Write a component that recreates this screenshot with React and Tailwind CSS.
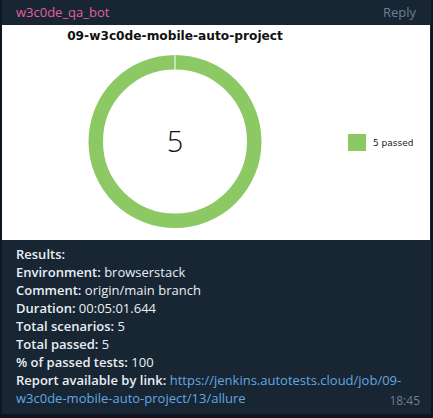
import React from "react";

const rows = [
  { label: "Environment:", value: "browserstack" },
  { label: "Comment:", value: "origin/main branch" },
  { label: "Duration:", value: "00:05:01.644" },
  { label: "Total scenarios:", value: "5" },
  { label: "Total passed:", value: "5" },
  { label: "% of passed tests:", value: "100" },
];

const Chart = () => (
  <svg width="428" height="215" viewBox="0 0 428 215" className="block">
    <rect width="428" height="215" fill="#ffffff" />
    <text
      x="173"
      y="15"
      textAnchor="middle"
      fontFamily="DejaVu Sans, sans-serif"
      fontWeight="bold"
      fontSize="12.2"
      fill="#111"
    >
      09-w3c0de-mobile-auto-project
    </text>
    <circle cx="173" cy="116.5" r="79.25" fill="none" stroke="#8cc863" strokeWidth="14.5" />
    <line x1="173" y1="29" x2="173" y2="46" stroke="#ffffff" strokeWidth="1" />
    <text
      x="173"
      y="127"
      textAnchor="middle"
      fontFamily="Open Sans, sans-serif"
      fontWeight="300"
      fontSize="29"
      fill="#111"
    >
      5
    </text>
    <rect x="346" y="109" width="18" height="17" fill="#8cc863" />
    <text x="371" y="121" fontFamily="DejaVu Sans, sans-serif" fontSize="9" fill="#222">
      5 passed
    </text>
  </svg>
);

export default function App() {
  return (
    <div className="w-[433px] h-[418px] bg-[#0e1621] overflow-hidden font-['Open_Sans',sans-serif]">
      <div className="ml-[2px] w-[429px] h-[414px] bg-[#182533] flex flex-col">
        <div className="h-[25px] flex items-center justify-between pl-[14px] pr-[15px] text-[13px]">
          <span className="text-[#e2609a]">w3c0de_qa_bot</span>
          <span className="text-[#6d7f8f]">Reply</span>
        </div>
        <Chart />
        <div className="pt-[5px] pl-[14px] pr-[10px] text-[13px] leading-[18px] text-[#e9eef3]">
          <div className="font-semibold">Results:</div>
          {rows.map((r) => (
            <div key={r.label}>
              <span className="font-semibold">{r.label}</span> {r.value}
            </div>
          ))}
          <div className="font-semibold">Report available by link:{" "}
            <span className="font-normal text-[#62a8e0]">https://jenkins.autotests.cloud/job/09-</span>
          </div>
          <div className="flex items-end justify-between">
            <span className="text-[#62a8e0]">w3c0de-mobile-auto-project/13/allure</span>
            <span className="mb-[-3px] mr-[1px] text-[12px] text-[#6d8094]">18:45</span>
          </div>
        </div>
      </div>
    </div>
  );
}
